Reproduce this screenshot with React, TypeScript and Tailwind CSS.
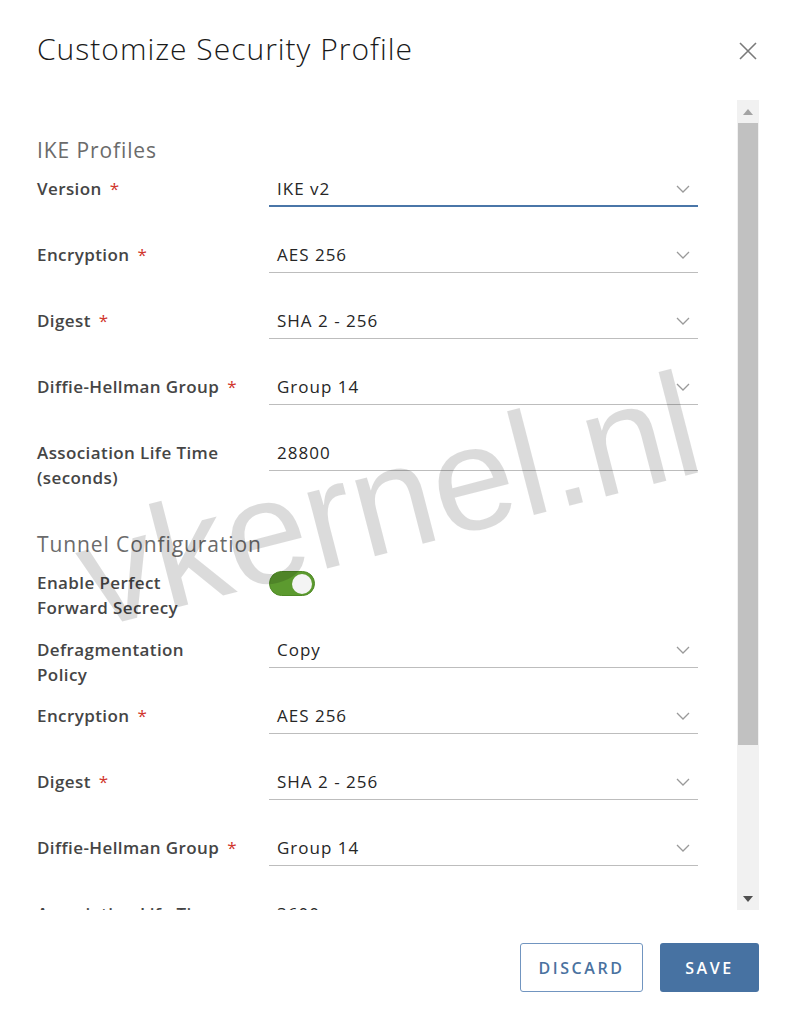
import React from "react";

const F = { fontFamily: '"Open Sans", "Liberation Sans", sans-serif' };

function Chevron() {
  return (
    <svg width="14" height="8" viewBox="0 0 14 8" className="shrink-0">
      <path d="M1 1 L7 7 L13 1" fill="none" stroke="#9a9a9a" strokeWidth="1.3" />
    </svg>
  );
}

function Label({ text, req }: { text: React.ReactNode; req?: boolean }) {
  return (
    <div className="w-[232px] shrink-0 pt-[4px] text-[17px] leading-[25px] font-semibold tracking-[0.4px] text-[#454545]">
      {text}
      {req && <span className="ml-[8px] text-[#d0352b] font-normal">*</span>}
    </div>
  );
}

function Select({ value, focus, chevron = true }: { value: string; focus?: boolean; chevron?: boolean }) {
  return (
    <div
      className={
        "w-[429px] h-[35px] flex items-center justify-between pl-[8px] pr-[8px] " +
        (focus ? "border-b-2 border-[#4a76a8]" : "border-b border-[#bdbdbd]")
      }
    >
      <span className="text-[17px] tracking-[1px] text-[#262626]">{value}</span>
      {chevron && <Chevron />}
    </div>
  );
}

function Row({ label, req, value, focus, chevron, h = "h-[66px]" }: any) {
  return (
    <div className={"flex items-start " + h}>
      <Label text={label} req={req} />
      <Select value={value} focus={focus} chevron={chevron} />
    </div>
  );
}

function Header({ children }: { children: React.ReactNode }) {
  return (
    <div className="mt-[30px] mb-[10px] text-[21px] leading-[24px] tracking-[0.9px] text-[#6b6b6b] font-normal">
      {children}
    </div>
  );
}

export default function App() {
  return (
    <div className="relative w-[792px] h-[1024px] bg-white flex flex-col overflow-hidden" style={F}>
      <div className="flex items-start justify-between pl-[37px] pr-[33px] pt-[29px] h-[100px]">
        <h1 className="text-[30px] leading-[40px] font-light tracking-[1px] text-[#1a1a1a]">Customize Security Profile</h1>
        <svg width="20" height="20" viewBox="0 0 20 20" className="mt-[12px] mr-[1px]">
          <path d="M2 2 L18 18 M18 2 L2 18" stroke="#7a7a7a" strokeWidth="1.6" fill="none" />
        </svg>
      </div>

      <div className="flex h-[810px]">
        <div className="flex-1 pl-[37px] pt-[8px] overflow-hidden">
          <Header>IKE Profiles</Header>
          <Row label="Version" req value="IKE v2" focus />
          <Row label="Encryption" req value="AES 256" />
          <Row label="Digest" req value="SHA 2 - 256" />
          <Row label="Diffie-Hellman Group" req value="Group 14" />
          <Row label={<>Association Life Time<br />(seconds)</>} value="28800" chevron={false} />
          <Header>Tunnel Configuration</Header>
          <div className="flex items-start h-[67px]">
            <Label text={<>Enable Perfect<br />Forward Secrecy</>} />
            <div className="mt-[5px] w-[46px] h-[25px] rounded-full bg-[#5c9a2f] border border-[#4f8a25] flex items-center justify-end pr-[2px]">
              <div className="w-[20px] h-[20px] rounded-full bg-[#f4f4f4]" />
            </div>
          </div>
          <Row label={<>Defragmentation<br />Policy</>} value="Copy" />
          <Row label="Encryption" req value="AES 256" />
          <Row label="Digest" req value="SHA 2 - 256" />
          <Row label="Diffie-Hellman Group" req value="Group 14" />
          <Row label={<>Association Life Time<br />(seconds)</>} value="3600" chevron={false} />
        </div>
        <div className="w-[22px] mr-[33px] ml-[17px] bg-[#f1f1f1] flex flex-col">
          <div className="h-[23px] flex items-center justify-center">
            <svg width="10" height="6" viewBox="0 0 10 6"><path d="M0 6 L5 0 L10 6 Z" fill="#a3a3a3" /></svg>
          </div>
          <div className="h-[622px] bg-[#c1c1c1] mx-[1px]" />
          <div className="flex-1" />
          <div className="h-[23px] flex items-center justify-center">
            <svg width="10" height="6" viewBox="0 0 10 6"><path d="M0 0 L5 6 L10 0 Z" fill="#505050" /></svg>
          </div>
        </div>
      </div>

      <div className="flex justify-end gap-[17px] pr-[33px] pt-[33px]">
        <button className="w-[123px] h-[49px] rounded-[3px] border border-[#7195c0] text-[#4a72a0] text-[16px] font-semibold tracking-[0.16em]">
          DISCARD
        </button>
        <button className="w-[99px] h-[49px] rounded-[3px] bg-[#4772a2] text-white text-[16px] font-semibold tracking-[0.16em]">
          SAVE
        </button>
      </div>

      <div
        className="pointer-events-none absolute left-[100px] top-[503px] text-[148px] leading-none text-[rgba(0,0,0,0.14)] origin-bottom-left -rotate-[14.5deg]"
        style={{ fontFamily: '"Liberation Sans", Arial, sans-serif' }}
      >
        vkernel.nl
      </div>
    </div>
  );
}
